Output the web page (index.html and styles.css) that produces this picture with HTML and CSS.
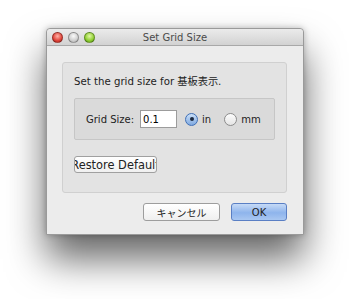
FILE: index.html
```html
<!DOCTYPE html>
<html lang="en">
<head>
    <meta charset="UTF-8">
    <title>Set Grid Size</title>
    <link rel="stylesheet" href="styles.css">
</head>
<body>
    <div class="window">
        <div class="title-bar">
            <div class="lights">
                <span class="light red"></span>
                <span class="light gray"></span>
                <span class="light green"></span>
            </div>
            <div class="title">Set Grid Size</div>
        </div>

        <div class="content">
            <div class="group">
                <div class="intro">Set the grid size for 基板表示.</div>
                <div class="inner">
                    <span class="label">Grid Size:</span>
                    <input type="text" class="size-input" value="0.1">
                    <label class="radio"><span class="dot checked"></span>in</label>
                    <label class="radio"><span class="dot"></span>mm</label>
                </div>
                <div class="restore"><span>Restore Default</span></div>
            </div>
            <div class="buttons">
                <button class="btn">キャンセル</button>
                <button class="btn ok">OK</button>
            </div>
        </div>
    </div>
</body>
</html>
```

FILE: styles.css
```css
* { margin: 0; padding: 0; box-sizing: border-box; }
body { background: #fff; width: 349px; height: 299px; overflow: hidden; font-family: "DejaVu Sans", "Noto Sans CJK JP", sans-serif; color: #222; }
.window { width: 258px; height: 207px; margin: 28px 0 0 46px; background: #ececec; border: 1px solid #9a9a9a; border-radius: 4px 4px 0 0; box-shadow: 0 24px 38px rgba(0,0,0,0.6), 0 0 6px rgba(0,0,0,0.25); display: flex; flex-direction: column; }
.title-bar { height: 17px; background: linear-gradient(#ebebeb, #d2d2d2); border-bottom: 1px solid #a8a8a8; border-radius: 4px 4px 0 0; display: flex; align-items: center; position: relative; }
.lights { display: flex; gap: 5px; padding-left: 5px; }
.light { width: 11px; height: 11px; border-radius: 50%; border: 1px solid rgba(0,0,0,0.3); }
.light.red { background: radial-gradient(circle at 50% 35%, #ffb3a8, #e0443a 60%, #a8261f); }
.light.gray { background: radial-gradient(circle at 50% 35%, #fafafa, #cfcfcf 60%, #a9a9a9); }
.light.green { background: radial-gradient(circle at 50% 35%, #e2f7a6, #8fcf32 60%, #5a9a16); }
.title { position: absolute; left: 0; right: 0; text-align: center; font-size: 10px; color: #4a4a4a; }
.content { flex: 1; padding: 16px 16px 0 15px; display: flex; flex-direction: column; }
.group { height: 131px; background: #e3e3e3; border: 1px solid #d0d0d0; border-radius: 3px; padding: 12px 11px 0 11px; }
.intro { font-size: 10.2px; height: 14px; line-height: 14px; color: #222; }
.inner { margin-top: 9px; height: 42px; background: #dadada; border: 1px solid #c6c6c6; border-radius: 2px; display: flex; align-items: center; padding-left: 11px; font-size: 10px; white-space: nowrap; }
.label { margin-right: 6px; flex-shrink: 0; }
.size-input { width: 37px; height: 18px; border: 1px solid #9c9c9c; background: #fff; font-family: inherit; font-size: 10px; padding-left: 2px; margin-right: 8px; outline: none; flex-shrink: 0; }
.radio { display: flex; align-items: center; margin-right: 13px; }
.dot { width: 13px; height: 13px; border-radius: 50%; border: 1px solid #8c8c8c; background: linear-gradient(#fdfdfd, #e4e4e4); margin-right: 4px; display: flex; align-items: center; justify-content: center; }
.dot.checked { border-color: #3f6fb6; background: linear-gradient(#cbe0f8, #80a9e0); }
.dot.checked::after { content: ""; width: 4px; height: 4px; border-radius: 50%; background: #1c2a40; }
.restore { margin-top: 16px; width: 83px; height: 17px; border: 1px solid #a0a0a0; border-radius: 3px; background: linear-gradient(#ffffff, #f0f0f0); overflow: hidden; display: flex; justify-content: center; align-items: center; font-size: 11.4px; white-space: nowrap; }
.restore span { flex-shrink: 0; }
.buttons { display: flex; justify-content: flex-end; gap: 11px; margin-top: 10px; }
.btn { height: 18px; border: 1px solid #9d9d9d; border-radius: 3px; background: linear-gradient(#ffffff, #efefef); font-family: inherit; font-size: 10px; color: #222; }
.btn:first-child { width: 77px; }
.btn.ok { width: 56px; border-color: #5a7fc4; background: linear-gradient(#c6daf6, #8eb4ec 55%, #a9c7f1); }
```
